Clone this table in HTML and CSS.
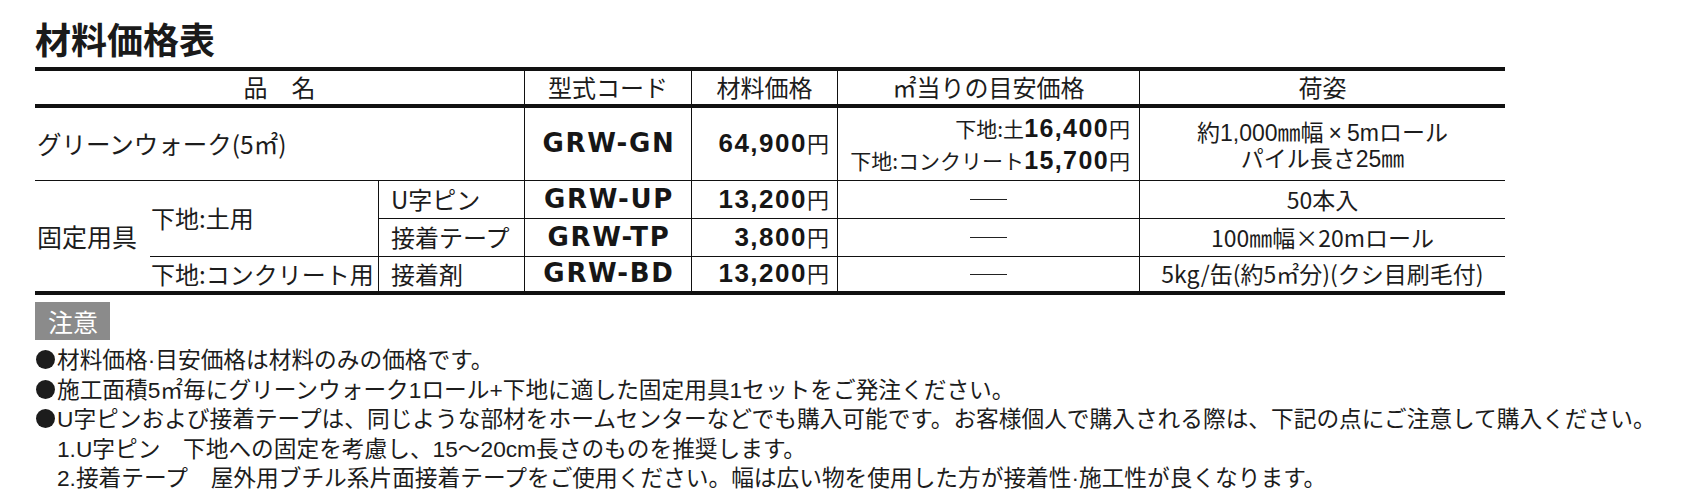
FILE: index.html
```html
<!DOCTYPE html>
<html lang="ja">
<head>
<meta charset="utf-8">
<title>材料価格表</title>
<link rel="stylesheet" href="styles.css">
</head>
<body>
<div class="page">
  <h1 class="title">材料価格表</h1>

  <div class="sheet">
    <div class="cell hd span3 vr">品　名</div>
    <div class="cell hd vr">型式コード</div>
    <div class="cell hd vr">材料価格</div>
    <div class="cell hd vr">㎡当りの目安価格</div>
    <div class="cell hd">荷姿</div>

    <div class="cell name span3 vr hb">グリーンウォーク(5㎡)</div>
    <div class="cell code vr hb">GRW-GN</div>
    <div class="cell price vr hb"><span><b class="num">64,900</b><span class="yen">円</span></span></div>
    <div class="cell est vr hb">
      <span>下地:土<b class="num">16,400</b><span class="yen">円</span></span>
      <span>下地:コンクリート<b class="num">15,700</b><span class="yen">円</span></span>
    </div>
    <div class="cell pack two hb"><span>約1,000㎜幅<span class="times">×</span>5mロール</span><span>パイル長さ25㎜</span></div>

    <div class="cell group rows3">固定用具</div>
    <div class="cell base rows2 vr hb">下地:土用</div>
    <div class="cell part vr hb">U字ピン</div>
    <div class="cell code vr hb">GRW-UP</div>
    <div class="cell price vr hb"><span><b class="num">13,200</b><span class="yen">円</span></span></div>
    <div class="cell dashcell vr hb"><span class="dash"></span></div>
    <div class="cell pack hb">50本入</div>

    <div class="cell part vr hb">接着テープ</div>
    <div class="cell code vr hb">GRW-TP</div>
    <div class="cell price vr hb"><span><b class="num">3,800</b><span class="yen">円</span></span></div>
    <div class="cell dashcell vr hb"><span class="dash"></span></div>
    <div class="cell pack hb">100㎜幅×20mロール</div>

    <div class="cell base vr">下地:コンクリート用</div>
    <div class="cell part vr">接着剤</div>
    <div class="cell code vr">GRW-BD</div>
    <div class="cell price vr"><span><b class="num">13,200</b><span class="yen">円</span></span></div>
    <div class="cell dashcell vr"><span class="dash"></span></div>
    <div class="cell pack">5kg/缶(約5㎡分)(クシ目刷毛付)</div>
  </div>

  <div class="notes">
    <div class="badge">注意</div>
    <ul class="note-list">
      <li class="bullet">材料価格·目安価格は材料のみの価格です。</li>
      <li class="bullet">施工面積5㎡毎にグリーンウォーク1ロール+下地に適した固定用具1セットをご発注ください。</li>
      <li class="bullet">U字ピンおよび接着テープは、同じような部材をホームセンターなどでも購入可能です。お客様個人で購入される際は、下記の点にご注意して購入ください。</li>
      <li class="sub">1.U字ピン　下地への固定を考慮し、15〜20cm長さのものを推奨します。</li>
      <li class="sub">2.接着テープ　屋外用ブチル系片面接着テープをご使用ください。幅は広い物を使用した方が接着性·施工性が良くなります。</li>
    </ul>
  </div>
</div>
</body>
</html>
```

FILE: styles.css
```css
* {
  box-sizing: border-box;
  margin: 0;
  padding: 0;
}

body {
  background: #ffffff;
  color: #1c1c1c;
  font-family: "Noto Sans CJK JP", "Noto Sans", sans-serif;
}

.page {
  padding: 18px 35px 0;
}

.title {
  font-size: 36px;
  line-height: 40px;
  font-weight: 700;
  color: #1a1a1a;
}

.sheet {
  margin-top: 9px;
  width: 1470px;
  display: grid;
  grid-template-columns: 115px 229px 146px 167px 146px 302px 365px;
  grid-template-rows: 37px 73px 38px 38px 34px;
  border-top: 4px solid #111;
  border-bottom: 4px solid #111;
}

.cell {
  display: flex;
  align-items: center;
  font-size: 24px;
  line-height: 1.2;
  white-space: nowrap;
}

.span3 { grid-column: span 3; }
.rows2 { grid-row: span 2; }
.rows3 { grid-row: span 3; }

.vr { border-right: 1px solid #111; }
.hb { border-bottom: 1px solid #111; }

.hd {
  justify-content: center;
  border-bottom: 4px solid #111;
  font-size: 24px;
}

.name {
  padding-left: 2px;
  font-size: 24.5px;
}

.group {
  padding-left: 2px;
  font-size: 25px;
}

.base {
  padding-left: 1px;
}

.part {
  padding-left: 12px;
}

.code {
  justify-content: center;
  font-family: "DejaVu Sans", "Liberation Sans", sans-serif;
  font-weight: 700;
  font-size: 26px;
  letter-spacing: 1.7px;
  padding-left: 2px;
  color: #161616;
}

.num {
  font-family: "Liberation Sans", Arial, sans-serif;
  font-weight: 700;
  font-size: 26px;
  letter-spacing: 1.5px;
  color: #161616;
}

.yen {
  font-size: 22px;
}

.price {
  justify-content: flex-end;
  padding-right: 8px;
}

.est {
  flex-direction: column;
  align-items: flex-end;
  justify-content: center;
  padding-right: 9px;
  font-size: 21px;
  line-height: 32px;
}

.est .num {
  font-size: 25px;
  letter-spacing: 1.4px;
}

.est .yen {
  font-size: 21px;
}

.dashcell {
  justify-content: center;
}

.dash {
  display: block;
  width: 37px;
  height: 1px;
  background: #222;
}

.pack {
  justify-content: center;
  font-size: 23px;
}

.pack.two {
  flex-direction: column;
  font-family: "Liberation Sans", "Noto Sans CJK JP", sans-serif;
  font-size: 23px;
  line-height: 26px;
  padding-top: 3px;
}

.times {
  padding: 0 5px;
}

.notes {
  margin-top: 7px;
}

.badge {
  display: inline-block;
  height: 38px;
  padding: 0 12px 0 13px;
  background: #8b8b8b;
  color: #ffffff;
  font-size: 25px;
  line-height: 38px;
}

.note-list {
  list-style: none;
  margin-top: 6px;
  font-family: "Liberation Sans", "Noto Sans CJK JP", sans-serif;
  font-size: 22.7px;
  line-height: 29.5px;
  color: #1c1c1c;
  white-space: nowrap;
}

.note-list .bullet::before {
  content: "";
  display: inline-block;
  width: 19px;
  height: 19px;
  margin: 0 2px 0 1px;
  border-radius: 50%;
  background: #1c1c1c;
  vertical-align: -1px;
}

.note-list .sub {
  padding-left: 22px;
}
```
